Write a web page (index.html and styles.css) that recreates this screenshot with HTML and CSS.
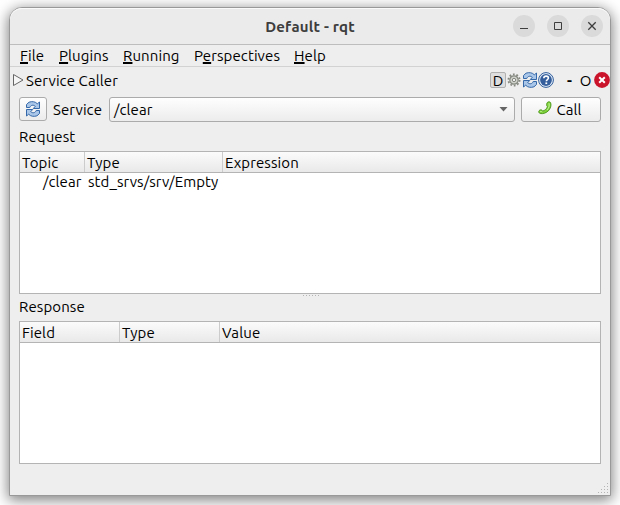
FILE: index.html
```html
<!DOCTYPE html>
<html lang="en">
<head>
<meta charset="utf-8">
<title>Default - rqt</title>
<link rel="stylesheet" href="styles.css">
</head>
<body>
<svg class="defs" width="0" height="0" aria-hidden="true">
  <symbol id="refresh" viewBox="0 0 16 16">
    <g stroke="#3568a8" stroke-width="1" stroke-linejoin="miter" fill="#a9c6e8">
      <path d="M1.500 3.500L4 1.200C7 .1 10.500.6 12.300 2.800L14.500 1v6.500H8.300l2-2.200C8.500 3.600 5.800 3.900 4.800 6.500H1.500z"/>
      <path d="M14.500 12.500L12 14.800c-3 1.100-6.500.6-8.300-1.600L1.500 15V8.500h6.200l-2 2.200c1.800 1.700 4.500 1.400 5.500-1.200h3.300z"/>
    </g>
  </symbol>
</svg>
<main class="window">
  <header class="titlebar">
    <h1 class="title">Default - rqt</h1>
    <div class="winbtns">
      <span class="winbtn"><svg width="22" height="22"><path d="M7 13.500h8" stroke="#3d3d3d" fill="none"/></svg></span>
      <span class="winbtn"><svg width="22" height="22"><path d="M7.500 7.500h7v7h-7z" stroke="#3d3d3d" fill="none"/></svg></span>
      <span class="winbtn"><svg width="22" height="22"><path d="M7.300 7.300l7.400 7.400M14.700 7.300l-7.400 7.400" stroke="#3d3d3d" stroke-width="1.300" fill="none"/></svg></span>
    </div>
  </header>
  <nav class="menubar">
    <span class="m-file"><u>F</u>ile</span>
    <span class="m-plugins"><u>P</u>lugins</span>
    <span class="m-running"><u>R</u>unning</span>
    <span class="m-persp">P<u>e</u>rspectives</span>
    <span class="m-help"><u>H</u>elp</span>
  </nav>
  <div class="dock">
    <svg class="tri" width="12" height="14"><path d="M1.500 1.500v11L11 7z" fill="#f6f6f6" stroke="#666"/></svg>
    <span class="dock-title">Service Caller</span>
    <div class="dock-tools">
      <span class="dbtn">D</span>
      <svg class="gear" width="14" height="14" viewBox="-7 -7 14 14">
        <circle r="5.600" fill="none" stroke="#85887f" stroke-width="1.800" stroke-dasharray="1.760 1.760"/>
        <circle r="4.200" fill="#d0d2cc" stroke="#85887f" stroke-width="1.200"/>
        <circle r="1.700" fill="#eee" stroke="#85887f"/>
      </svg>
      <svg width="16" height="16"><use href="#refresh"/></svg>
      <svg width="16" height="16" viewBox="0 0 16 16">
        <circle cx="8" cy="8" r="7.400" fill="#e8eff8" stroke="#2f5d9b"/>
        <circle cx="8" cy="8" r="5.900" fill="#355f9c"/>
        <path d="M5.800 6.200c.1-1.500 1-2.100 2.300-2.100s2.300.7 2.300 1.900c0 1.500-2.100 1.600-2.100 3.300" fill="none" stroke="#fff" stroke-width="1.600"/>
        <rect x="7.400" y="10.400" width="1.800" height="1.700" fill="#fff"/>
      </svg>
      <span class="dash">-</span>
      <span class="oh">O</span>
      <svg width="16" height="16" viewBox="0 0 16 16">
        <circle cx="8" cy="8" r="7.900" fill="#c9142c"/>
        <path d="M5.200 5.200l5.600 5.600M10.800 5.200l-5.600 5.600" stroke="#fff" stroke-width="2"/>
      </svg>
    </div>
  </div>
  <div class="controls">
    <button class="btn refresh"><svg width="16" height="16"><use href="#refresh"/></svg></button>
    <span class="service">Service</span>
    <div class="combo"><span class="clear">/clear</span><svg width="9" height="5"><path d="M.5 0h8L4.500 4.500z" fill="#666"/></svg></div>
    <button class="btn call">
      <svg width="14" height="14" viewBox="0 0 14 14"><path d="M9.500 1.300c.9-.9 2.600-.7 3.200.5.900 2.600-.2 5.900-2.400 8.100-2.300 2.200-5.400 3.200-8.100 2.600C.8 12.100.4 10.800 1 9.800c.7-1 2.200-1.300 3.100-.5l.6.7c2.200-.5 4-2.200 4.700-4.300-1.100-.9-1.100-3.300.1-4.400z" fill="#7fd13b" stroke="#3f8a10" stroke-width=".8"/><path d="M11 2.200c.7 2.600-.2 5-2 6.800M2 10.800c.8-.7 1.600-.5 2.200.2" fill="none" stroke="#c4f39b"/></svg>
      <span>Call</span>
    </button>
  </div>
  <h2 class="label request">Request</h2>
  <section class="table req">
    <div class="row head"><span class="topic">Topic</span><span class="type">Type</span><span class="expr">Expression</span></div>
    <div class="row"><span class="clear item">/clear</span><span class="srv">std_srvs/srv/Empty</span></div>
  </section>
  <div class="splitter"><i></i></div>
  <h2 class="label response">Response</h2>
  <section class="table res">
    <div class="row head"><span class="field">Field</span><span class="type">Type</span><span class="value">Value</span></div>
  </section>
  <svg class="grip" width="11" height="11" fill="#b4b4b4"><path d="M9 0h1v1H9zM6 3h1v1H6zM9 3h1v1H9zM3 6h1v1H3zM6 6h1v1H6zM9 6h1v1H9zM0 9h1v1H0zM3 9h1v1H3zM6 9h1v1H6zM9 9h1v1H9z"/></svg>
</main>
</body>
</html>
```
FILE: styles.css
```css
* { box-sizing: border-box; }
body {
  margin: 0;
  width: 620px;
  height: 505px;
  overflow: hidden;
  padding: 7px 9px;
  background: #fff;
  color: #000;
  font: 15px/20px "Ubuntu", "Noto Sans", sans-serif;
  letter-spacing: .1px;
}
.defs { position: absolute; }
svg { display: block; flex: none; }
span { white-space: nowrap; }
.window {
  position: relative;
  width: 602px;
  height: 489px;
  border: 1px solid #999;
  border-radius: 13px 13px 0 0;
  background: #eee;
  box-shadow: 0 3px 14px 1px rgba(0, 0, 0, .5);
}
.titlebar {
  display: grid;
  grid-template-columns: 1fr auto 1fr;
  align-items: center;
  height: 37px;
  border-bottom: 1px solid #bdbdbd;
  border-radius: 12px 12px 0 0;
  background: #ebebeb;
  box-shadow: inset 0 1px #fafafa;
}
.title {
  grid-column: 2;
  margin: 1px 0 0;
  color: #3d3d3d;
  font-size: 15px;
  font-weight: 700;
  letter-spacing: .2px;
}
.winbtns { display: flex; justify-content: flex-end; gap: 12px; padding-right: 7px; }
.winbtn { width: 22px; height: 22px; border-radius: 50%; background: #dadada; }
.menubar {
  display: flex;
  height: 22px;
  padding-left: 10px;
  border-bottom: 1px solid #d2d2d2;
  line-height: 22px;
}
.menubar u { text-decoration-thickness: 2px; text-underline-offset: 1px; text-decoration-skip-ink: none; }
.m-file { width: 39px; }
.m-plugins { width: 64px; }
.m-running { width: 71px; }
.m-persp { width: 100px; }
.dock { display: flex; align-items: center; height: 27px; padding-left: 2px; }
.tri { margin-top: -1px; }
.dock-title { margin-left: 2px; }
.dock-tools { display: flex; align-items: center; height: 26px; margin: -1px 0 0 auto; }
.dbtn {
  width: 16px;
  height: 16px;
  border: 1px solid #b0b0b0;
  border-radius: 2px;
  background: #dedede;
  line-height: 16px;
  text-align: center;
}
.gear { margin: 0 1px; }
.dash { width: 25px; padding: 2px 0 0 13px; font-weight: 700; }
.oh { width: 15px; padding: 2px 2px 0 0; text-align: center; }
.controls { display: flex; align-items: center; height: 26px; margin: 2px 9px 0; }
.btn, .combo {
  display: flex;
  align-items: center;
  padding: 0;
  border: 1px solid #ababab;
  border-radius: 3px;
  background: linear-gradient(#fefefe, #ececec);
  color: #000;
  font: inherit;
  letter-spacing: inherit;
}
.refresh { justify-content: center; width: 28px; height: 24px; }
.service { width: 56px; margin: 2px 0 0 6px; }
.combo { justify-content: space-between; width: 406px; height: 25px; padding: 0 6px 0 4px; }
.combo .clear { padding-top: 2px; }
.call { justify-content: center; gap: 4px; width: 80px; height: 25px; margin-left: 6px; padding-right: 2px; }
.call svg { margin-top: -2px; }
.call span { padding-top: 2px; }
.label { margin: 0 9px; font-size: 15px; font-weight: 400; line-height: 20px; }
.request { margin-top: 5px; height: 24px; }
.table { width: 582px; height: 143px; margin: 0 9px; border: 1px solid #b4b4b4; background: #fff; }
.row { display: flex; height: 20px; line-height: 20px; }
.head { height: 21px; border-bottom: 1px solid #b4b4b4; background: linear-gradient(#fbfbfb, #e9e9e9); line-height: 21px; }
.head span { padding-left: 2px; border-right: 1px solid #ccc; }
.head span:last-child { flex: 1; border: 0; }
.topic { width: 65px; }
.req .type { width: 138px; }
.item { width: 68px; padding-left: 23px; line-height: 18px; }
.srv { line-height: 18px; }
.res .type, .field { width: 100px; }
.splitter { display: flex; justify-content: center; height: 3px; padding-top: 1px; }
.splitter i { width: 17px; height: 1px; margin-left: 2px; background: repeating-linear-gradient(90deg, #b4b4b4 0 1px, transparent 1px 3px); }
.response { height: 24px; }
.grip { position: absolute; right: 1px; bottom: 1px; }
```
